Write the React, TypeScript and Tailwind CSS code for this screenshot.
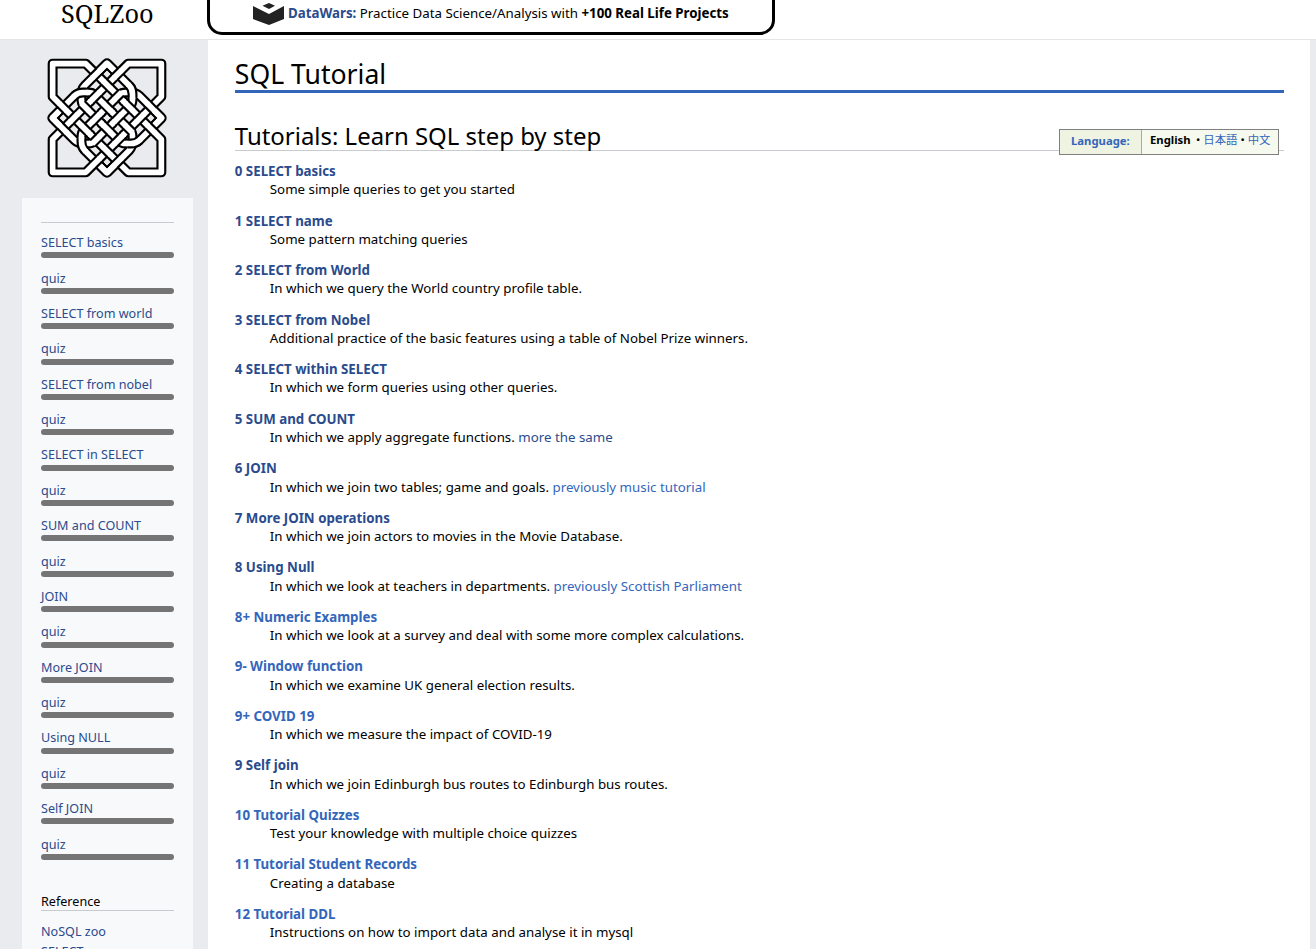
import React from "react";

type Lesson = { title: string; text: string; link?: string; linkVisited?: boolean; fresh?: boolean };

const lessons: Lesson[] = [
  { title: "0 SELECT basics", text: "Some simple queries to get you started" },
  { title: "1 SELECT name", text: "Some pattern matching queries" },
  { title: "2 SELECT from World", text: "In which we query the World country profile table." },
  { title: "3 SELECT from Nobel", text: "Additional practice of the basic features using a table of Nobel Prize winners." },
  { title: "4 SELECT within SELECT", text: "In which we form queries using other queries." },
  { title: "5 SUM and COUNT", text: "In which we apply aggregate functions. ", link: "more the same", linkVisited: true },
  { title: "6 JOIN", text: "In which we join two tables; game and goals. ", link: "previously music tutorial" },
  { title: "7 More JOIN operations", text: "In which we join actors to movies in the Movie Database." },
  { title: "8 Using Null", text: "In which we look at teachers in departments. ", link: "previously Scottish Parliament" },
  { title: "8+ Numeric Examples", text: "In which we look at a survey and deal with some more complex calculations.", fresh: true },
  { title: "9- Window function", text: "In which we examine UK general election results.", fresh: true },
  { title: "9+ COVID 19", text: "In which we measure the impact of COVID-19", fresh: true },
  { title: "9 Self join", text: "In which we join Edinburgh bus routes to Edinburgh bus routes." },
  { title: "10 Tutorial Quizzes", text: "Test your knowledge with multiple choice quizzes", fresh: true },
  { title: "11 Tutorial Student Records", text: "Creating a database", fresh: true },
  { title: "12 Tutorial DDL", text: "Instructions on how to import data and analyse it in mysql", fresh: true },
];

const sections = [
  "SELECT basics",
  "SELECT from world",
  "SELECT from nobel",
  "SELECT in SELECT",
  "SUM and COUNT",
  "JOIN",
  "More JOIN",
  "Using NULL",
  "Self JOIN",
];
const progress = sections.flatMap((s) => [s, "quiz"]);

// Woven knot: diagonal lines of a 6x6 lattice; strands alternate over and under.
const lattice = [-165, -100, -33, 33, 100, 165];
const strands = [
  "M-143 -22L-165 0L-143 22",
  "M52 -48L-64 -164H-164V-64L-48 52",
  "M-165 0L-98 -67Q-88 -77 -72 -77H-56Q-44 -77 -38 -71L19 -14",
  "M0 -165L-67 -98Q-77 -88 -77 -72V-56Q-77 -44 -71 -38L-14 19",
];
const turns = [0, 90, 180, 270];

function crossings(reach: number) {
  const out: string[] = [];
  lattice.forEach((u, i) =>
    lattice.forEach((v, j) => {
      const outerU = i === 0 || i === 5;
      const outerV = j === 0 || j === 5;
      if (outerU && (j === 2 || j === 3 || outerV)) return;
      if (outerV && (i === 2 || i === 3)) return;
      const x = (u + v) / 2;
      const y = (u - v) / 2;
      const s = (i + j) % 2 === 0 ? -1 : 1;
      out.push(`M${x - reach} ${y - reach * s}L${x + reach} ${y + reach * s}`);
    })
  );
  return out;
}

const layers = [
  { color: "#000", width: 30, over: crossings(9), bend: "M-98 -67Q-88 -77 -72 -77H-62" },
  { color: "#fff", width: 17, over: crossings(11), bend: "M-101 -64L-98 -67Q-88 -77 -72 -77H-58" },
];

function Knot() {
  return (
    <svg width="120" height="120" viewBox="-181 -181 362 362" fill="none" strokeLinejoin="round">
      {layers.map((b) =>
        turns.map((t) => (
          <g key={b.color + t} transform={`rotate(${t})`} stroke={b.color} strokeWidth={b.width}>
            {strands.map((d) => (
              <path key={d} d={d} />
            ))}
          </g>
        ))
      )}
      {layers.map((b) => (
        <g key={b.color} stroke={b.color} strokeWidth={b.width}>
          {b.over.map((d) => (
            <path key={d} d={d} />
          ))}
          {turns.map((t) => (
            <path key={t} transform={`rotate(${t})`} d={b.bend} />
          ))}
        </g>
      ))}
    </svg>
  );
}

export default function App() {
  return (
    <div className="flex h-[949px] w-[1316px] flex-col overflow-hidden bg-[#eaebef] text-[13.3px] text-black [font-family:'Noto_Sans','Noto_Sans_CJK_JP',sans-serif]">
      <header className="flex h-10 shrink-0 items-start border-b border-[#e4e5e8] bg-white">
        <div className="w-[207px] shrink-0 pl-[61px] text-[25.35px] leading-[26px] [font-family:'Noto_Serif','Droid_Serif','Liberation_Serif',serif]">
          SQLZoo
        </div>
        <div className="-mt-5 flex h-[55px] w-[568px] items-end rounded-[15px] border-[3px] border-black bg-white pb-[7px] pl-[43px]">
          <svg width="32" height="24" viewBox="0 0 32 24" className="shrink-0">
            <path d="M9.5 4.8L16 2L22 4.8L16 8Z" fill="#222" />
            <path d="M0 5L16 13L31 5V18L16 24L0 18Z" fill="#222" />
          </svg>
          <p className="ml-[3px] whitespace-nowrap leading-[24px]">
            <b className="font-bold text-[#2a4b8d]">DataWars:</b> Practice Data Science/Analysis with{" "}
            <b className="font-bold">+100 Real Life Projects</b>
          </p>
        </div>
      </header>
      <div className="flex min-h-0 flex-1">
        <aside className="flex w-[208px] shrink-0 flex-col pl-[22px]">
          <div className="h-[158px] shrink-0 pl-[25px] pt-[18px]">
            <Knot />
          </div>
          <nav className="w-[171px] flex-1 bg-[#f8f9fb] px-[19px] pt-6 text-[12.6px] text-[#2a4b8d]">
            <div className="mb-[10.2px] border-t border-[#c8ccd1]" />
            {progress.map((name, i) => (
              <div key={i} className="h-[35.38px]">
                <a className="block h-[19.25px] leading-[20px]">{name}</a>
                <div className="h-[6px] rounded-[3px] bg-[#757575]" />
              </div>
            ))}
            <h3 className="mt-[22px] h-[19px] border-b border-[#c8ccd1] leading-[20px] text-black">Reference</h3>
            <a className="mt-[11px] block leading-5">NoSQL zoo</a>
            <a className="block leading-5">SELECT ..</a>
          </nav>
        </aside>
        <main className="w-[1102px] shrink-0 bg-white pl-[26.8px] pr-[26px]">
          <h1 className="h-[53px] border-b-[3px] border-[#3366bb] pt-[14px] text-[26.6px] leading-[40px]">SQL Tutorial</h1>
          <div className="mt-[26px] flex h-[32px] justify-between border-b border-[#c8ccd1]">
            <h2 className="whitespace-nowrap pt-[3px] text-[23.95px] leading-[28px]">Tutorials: Learn SQL step by step</h2>
            <div className="mr-[5px] mt-[10px] flex h-[26px] w-[220px] border border-[#808080] bg-[#f6f9ed] text-[11.4px]">
              <div className="w-[82px] border-r border-[#aaa] bg-[#eff3e2] pl-[11px] text-[11.3px] font-bold leading-[22px] text-[#3366bb]">
                Language:
              </div>
              <div className="whitespace-nowrap pl-[8px] leading-[19px]">
                <b className="mr-[5px] text-[11.3px] font-bold">English</b> <span className="-ml-[2.5px]">• </span>
                <span className="text-[#3366bb]">日本語</span> • <span className="text-[#3366bb]">中文</span>
              </div>
            </div>
          </div>
          <dl className="pt-[10px]">
            {lessons.map((l) => (
              <div key={l.title} className="h-[49.53px] whitespace-nowrap">
                <dt className={"h-[18.42px] font-bold leading-[20px] " + (l.fresh ? "text-[#3366bb]" : "text-[#2a4b8d]")}>
                  {l.title}
                </dt>
                <dd className="pl-[35px] leading-[20px]">
                  {l.text}
                  {l.link && <a className={l.linkVisited ? "text-[#2a4b8d]" : "text-[#3366bb]"}>{l.link}</a>}
                </dd>
              </div>
            ))}
          </dl>
        </main>
      </div>
    </div>
  );
}
